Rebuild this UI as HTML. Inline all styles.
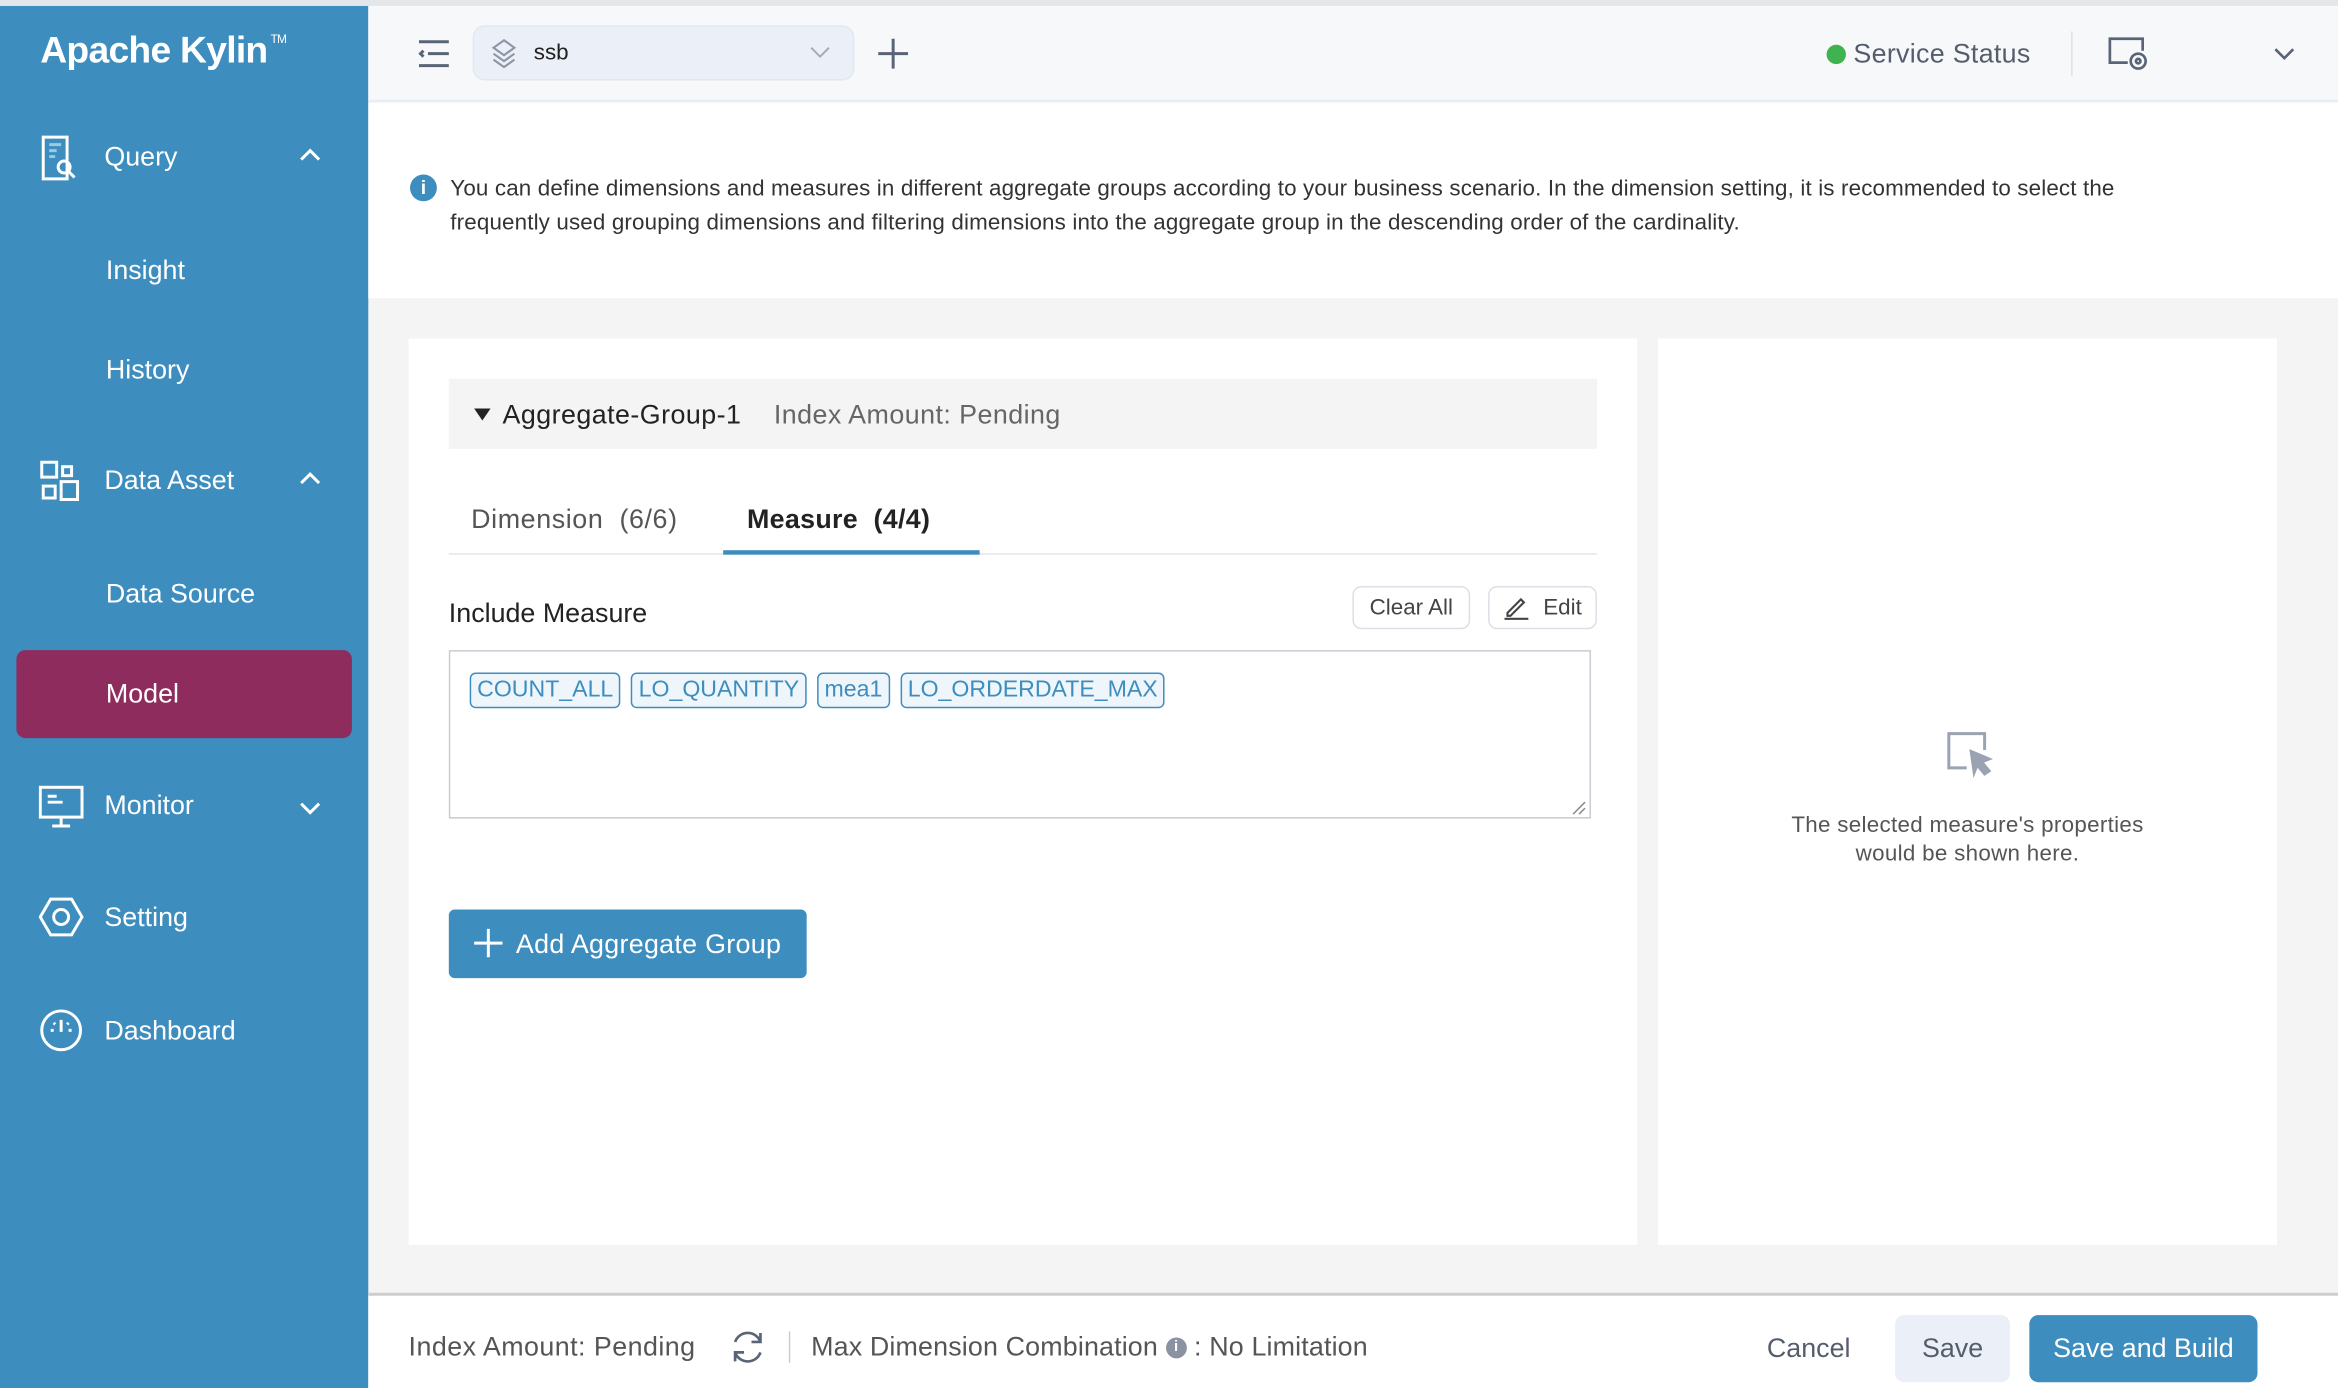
<!DOCTYPE html>
<html><head><meta charset="utf-8"><style>
*{box-sizing:border-box;margin:0;padding:0}
html,body{width:2338px;height:1388px;overflow:hidden;background:#fff;font-family:"Liberation Sans",Arial,sans-serif}
#w{position:absolute;left:0;top:0;width:1568px;height:931px;transform:scale(1.49107);transform-origin:0 0;background:#f4f4f4}
.a{position:absolute}
.side{left:0;top:4px;width:247px;height:927px;background:#3d8dbe;color:#fff}
.nav{position:absolute;left:70px;font-size:18px}
.ic{position:absolute;left:26px}
.chev{position:absolute;left:200px}
.tag{border:1px solid #3d8dbe;background:#eef6fb;border-radius:4px;padding:2px 4px}
</style></head><body><div id="w">
<div class="a" style="left:0;top:0;width:1568px;height:4px;background:#e4e6ea"></div>
<div class="a side">
 <div class="a" style="left:27px;top:16px;font-size:25px;font-weight:bold;letter-spacing:-0.5px">Apache Kylin<sup style="font-size:8px;font-weight:normal;vertical-align:top;position:relative;top:2px;left:2px">TM</sup></div>
 <svg class="ic" style="top:86px" width="28" height="32" viewBox="0 0 28 32" fill="none" stroke="#fff" stroke-width="2"><path d="M3 2h16v28H3z"/><path d="M7 7h8M7 11h5M7 15h4" stroke="#9cd"/><circle cx="17" cy="22" r="4"/><path d="M20 25l4 4"/></svg>
 <div class="nav" style="top:91px">Query</div>
 <svg class="chev" style="top:94px" width="16" height="12" viewBox="0 0 16 12" fill="none" stroke="#fff" stroke-width="2"><path d="M2 9l6-6 6 6"/></svg>
 <div class="nav" style="left:71px;top:167px">Insight</div>
 <div class="nav" style="left:71px;top:234px">History</div>
 <svg class="ic" style="top:304px" width="28" height="30" viewBox="0 0 28 30" fill="none" stroke="#fff" stroke-width="2"><rect x="2" y="2" width="10" height="10"/><rect x="16" y="5" width="6" height="6"/><rect x="3" y="18" width="8" height="8"/><rect x="15" y="15" width="11" height="12"/></svg>
 <div class="nav" style="top:308px">Data Asset</div>
 <svg class="chev" style="top:311px" width="16" height="12" viewBox="0 0 16 12" fill="none" stroke="#fff" stroke-width="2"><path d="M2 9l6-6 6 6"/></svg>
 <div class="nav" style="left:71px;top:384px">Data Source</div>
 <div class="a" style="left:11px;top:432px;width:225px;height:59px;background:#8e2c5e;border-radius:6px"></div>
 <div class="nav" style="left:71px;top:451px">Model</div>
 <svg class="ic" style="top:522px" width="30" height="30" viewBox="0 0 30 30" fill="none" stroke="#fff" stroke-width="2"><rect x="1" y="2" width="28" height="20"/><path d="M6 8h6M6 12h10M15 22v5M9 28h12"/></svg>
 <div class="nav" style="top:526px">Monitor</div>
 <svg class="chev" style="top:532px" width="16" height="12" viewBox="0 0 16 12" fill="none" stroke="#fff" stroke-width="2"><path d="M2 3l6 6 6-6"/></svg>
 <svg class="ic" style="top:597px" width="30" height="28" viewBox="0 0 30 28" fill="none" stroke="#fff" stroke-width="2"><path d="M8 2h14l7 12-7 12H8L1 14z"/><circle cx="15" cy="14" r="5"/></svg>
 <div class="nav" style="top:601px">Setting</div>
 <svg class="ic" style="top:672px" width="30" height="30" viewBox="0 0 30 30" fill="none" stroke="#fff" stroke-width="2"><circle cx="15" cy="15" r="13"/><path d="M15 16V8M8 15h2M20 15h2M10 10l1 1M20 10l-1 1"/></svg>
 <div class="nav" style="top:677px">Dashboard</div>
</div>
<div class="a" style="left:247px;top:4px;width:1321px;height:64px;background:#f7f8fa;border-bottom:1px solid #e5eaf2"></div>
<svg class="a" style="left:279px;top:26px" width="24" height="20" viewBox="0 0 24 20" fill="none" stroke="#5a6477" stroke-width="2"><path d="M2 2h20M8 10h14M2 18h20M5 8l-2 2 2 2"/></svg>
<div class="a" style="left:317px;top:17px;width:256px;height:37px;background:#ebeff7;border:1px solid #e2e7f0;border-radius:8px"></div>
<svg class="a" style="left:329px;top:26px" width="18" height="20" viewBox="0 0 18 20" fill="none" stroke="#8d95a5" stroke-width="1.4"><path d="M9 1l7 5-7 5-7-5z"/><path d="M2 10l7 5 7-5M2 14l7 5 7-5"/></svg>
<div class="a" style="left:358px;top:27px;font-size:15px;color:#222">ssb</div>
<svg class="a" style="left:543px;top:30px" width="14" height="10" viewBox="0 0 14 10" fill="none" stroke="#a4abb8" stroke-width="1.3"><path d="M1 2l6 6 6-6"/></svg>
<svg class="a" style="left:588px;top:25px" width="22" height="22" viewBox="0 0 22 22" stroke="#5a6477" stroke-width="2"><path d="M11 1v20M1 11h20"/></svg>
<div class="a" style="left:1225px;top:30px;width:13px;height:13px;border-radius:50%;background:#3fb34f"></div>
<div class="a" style="left:1243px;top:26px;font-size:18px;color:#555d6d;letter-spacing:0.2px">Service Status</div>
<div class="a" style="left:1389px;top:21px;width:1px;height:30px;background:#dde1e8"></div>
<svg class="a" style="left:1413px;top:24px" width="30" height="26" viewBox="0 0 30 26" fill="none" stroke="#5a6477" stroke-width="1.8"><path d="M14 18H2V2h22v8"/><circle cx="21" cy="17" r="5"/><circle cx="21" cy="17" r="1.5"/></svg>
<svg class="a" style="left:1524px;top:30px" width="16" height="12" viewBox="0 0 16 12" fill="none" stroke="#5a6477" stroke-width="1.8"><path d="M2 3l6 6 6-6"/></svg>
<div class="a" style="left:247px;top:69px;width:1321px;height:131px;background:#fff"></div>
<div class="a" style="left:275px;top:117px;width:18px;height:18px;border-radius:50%;background:#3d8dbe;color:#fff;font-size:13px;font-weight:bold;text-align:center;line-height:18px">i</div>
<div class="a" style="left:302px;top:115px;width:1180px;font-size:15px;line-height:23px;color:#333;letter-spacing:0.1px">You can define dimensions and measures in different aggregate groups according to your business scenario. In the dimension setting, it is recommended to select the frequently used grouping dimensions and filtering dimensions into the aggregate group in the descending order of the cardinality.</div>
<div class="a" style="left:274px;top:227px;width:824px;height:608px;background:#fff"></div>
<div class="a" style="left:1112px;top:227px;width:415px;height:608px;background:#fff"></div>
<div class="a" style="left:301px;top:254px;width:770px;height:47px;background:#f4f4f5"></div>
<svg class="a" style="left:318px;top:274px" width="11" height="8" viewBox="0 0 11 8"><path d="M0 0h11L5.5 8z" fill="#222"/></svg>
<div class="a" style="left:337px;top:268px;font-size:18px;color:#222;letter-spacing:0.3px">Aggregate-Group-1</div>
<div class="a" style="left:519px;top:268px;font-size:18px;color:#666;letter-spacing:0.3px">Index Amount: Pending</div>
<div class="a" style="left:301px;top:371px;width:770px;height:1px;background:#e5e6ea"></div>
<div class="a" style="left:316px;top:338px;font-size:18px;color:#555;letter-spacing:0.4px">Dimension&nbsp;&nbsp;(6/6)</div>
<div class="a" style="left:501px;top:338px;font-size:18px;color:#222;font-weight:bold;letter-spacing:0.2px">Measure&nbsp;&nbsp;(4/4)</div>
<div class="a" style="left:485px;top:369px;width:172px;height:3px;background:#3d8dbe"></div>
<div class="a" style="left:301px;top:401px;font-size:18px;color:#222">Include Measure</div>
<div class="a" style="left:907px;top:393px;width:79px;height:29px;border:1px solid #dcdfe6;border-radius:6px;font-size:15px;color:#444;text-align:center;line-height:27px">Clear All</div>
<div class="a" style="left:998px;top:393px;width:73px;height:29px;border:1px solid #dcdfe6;border-radius:6px;font-size:15px;color:#444;line-height:27px;padding-left:36px">Edit</div>
<svg class="a" style="left:1008px;top:398px" width="18" height="18" viewBox="0 0 18 18" fill="none" stroke="#444" stroke-width="1.4"><path d="M3 13l9-9 2 2-9 9H3z M1 17h16"/></svg>
<div class="a" style="left:301px;top:436px;width:766px;height:113px;border:1px solid #c8ccd3"></div>
<div class="a" style="left:315px;top:451px;display:flex;gap:7px;font-size:15.5px;color:#3d8dbe">
 <span class="tag">COUNT_ALL</span>
 <span class="tag">LO_QUANTITY</span>
 <span class="tag">mea1</span>
 <span class="tag">LO_ORDERDATE_MAX</span>
</div>
<svg class="a" style="left:1054px;top:537px" width="10" height="10" viewBox="0 0 10 10" stroke="#888"><path d="M1 9L9 1M5 9l4-4"/></svg>
<div class="a" style="left:301px;top:610px;width:240px;height:46px;background:#3d8dbe;border-radius:4px;color:#fff;font-size:18px;line-height:46px;padding-left:45px;letter-spacing:0.2px">Add Aggregate Group</div>
<svg class="a" style="left:317px;top:622px" width="21" height="21" viewBox="0 0 21 21" stroke="#fff" stroke-width="2"><path d="M10.5 1v19M1 10.5h19"/></svg>
<svg class="a" style="left:1305px;top:490px" width="34" height="34" viewBox="0 0 34 34" fill="none" stroke="#9aa3b2" stroke-width="2"><path d="M14 25H2V2h24v11"/><path d="M17 14l12 5-5 2 5 6-3 2-5-6-2 5z" fill="#9aa3b2"/></svg>
<div class="a" style="left:1112px;top:544px;width:415px;text-align:center;font-size:15px;line-height:19px;color:#555;letter-spacing:0.2px">The selected measure's properties<br>would be shown here.</div>
<div class="a" style="left:247px;top:867px;width:1321px;height:64px;background:#fff;border-top:2px solid #cdcdcd"></div>
<div class="a" style="left:274px;top:893px;font-size:18px;color:#555;letter-spacing:0.3px">Index Amount: Pending</div>
<svg class="a" style="left:489px;top:891px" width="25" height="25" viewBox="0 0 25 25" fill="none" stroke="#5a6477" stroke-width="1.8"><path d="M21 9A9 9 0 0 0 4 9M4 16a9 9 0 0 0 17 0M21 3v6h-6M4 22v-6h6"/></svg>
<div class="a" style="left:529px;top:893px;width:1px;height:21px;background:#ccc"></div>
<div class="a" style="left:544px;top:893px;font-size:18px;color:#555;letter-spacing:0.1px">Max Dimension Combination <span style="display:inline-block;width:14px;height:14px;border-radius:50%;background:#8b93a2;color:#fff;font-size:10px;text-align:center;line-height:14px;font-weight:bold;vertical-align:middle;letter-spacing:0">i</span> : No Limitation</div>
<div class="a" style="left:1185px;top:894px;font-size:18px;color:#555d6d">Cancel</div>
<div class="a" style="left:1271px;top:882px;width:77px;height:45px;background:#ebeff7;border-radius:6px;font-size:18px;color:#555d6d;text-align:center;line-height:45px">Save</div>
<div class="a" style="left:1361px;top:882px;width:153px;height:45px;background:#3d8dbe;border-radius:6px;font-size:18px;color:#fff;text-align:center;line-height:45px">Save and Build</div>
</div></body></html>
